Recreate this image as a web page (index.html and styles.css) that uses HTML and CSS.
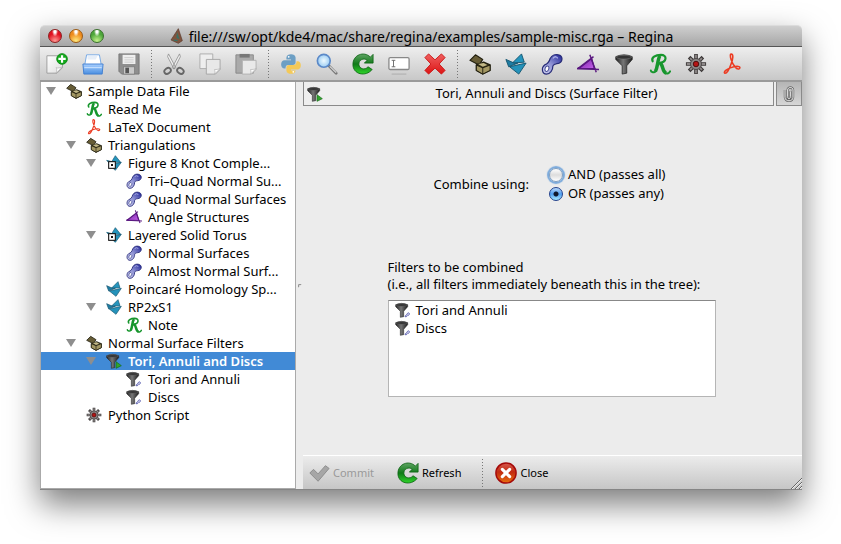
FILE: index.html
```html
<!DOCTYPE html>
<html lang="en">
<head>
<meta charset="utf-8">
<title>sample-misc.rga – Regina</title>
<link rel="stylesheet" href="styles.css">
</head>
<body>
<svg class="defs" aria-hidden="true">
  <defs>
    <linearGradient id="g-blue" x1="0" y1="0" x2="0" y2="1"><stop offset="0" stop-color="#a9d0ff"/><stop offset="1" stop-color="#4a8ee0"/></linearGradient>
    <linearGradient id="g-page" x1="0" y1="0" x2="1" y2="1"><stop offset="0" stop-color="#fff"/><stop offset="1" stop-color="#dedede"/></linearGradient>
    <linearGradient id="g-green" x1="0" y1="0" x2="0" y2="1"><stop offset="0" stop-color="#5fa364"/><stop offset=".5" stop-color="#107a18"/><stop offset="1" stop-color="#2fd42a"/></linearGradient>
    <linearGradient id="g-red" x1="0" y1="0" x2="0" y2="1"><stop offset="0" stop-color="#ef6060"/><stop offset="1" stop-color="#dd1414"/></linearGradient>
    <linearGradient id="g-funnel" x1="0" y1="0" x2="1" y2="0"><stop offset="0" stop-color="#222"/><stop offset=".45" stop-color="#777"/><stop offset="1" stop-color="#1c1c1c"/></linearGradient>
    <linearGradient id="g-link" x1="0" y1="1" x2="1" y2="0"><stop offset="0" stop-color="#d4d6f4"/><stop offset=".5" stop-color="#8a8ed2"/><stop offset="1" stop-color="#1d2196"/></linearGradient>
    <linearGradient id="g-angle" x1="0" y1="0" x2="1" y2="1"><stop offset="0" stop-color="#7023a0"/><stop offset="1" stop-color="#c860ec"/></linearGradient>
    <radialGradient id="g-lens"><stop offset="0" stop-color="#eefaff"/><stop offset="1" stop-color="#9ccdf3"/></radialGradient>
    <linearGradient id="g-close" x1="0" y1="0" x2="0" y2="1"><stop offset="0" stop-color="#d65a50"/><stop offset=".45" stop-color="#c22a10"/><stop offset="1" stop-color="#e8700e"/></linearGradient>
  </defs>
  <symbol id="new" viewBox="0 0 24 24"><path d="M1 3h17v13l-6 6H1z" fill="url(#g-page)" stroke="#999"/><path d="M18 15l-7 7c1-3 1-5 0-6 2 1 5 0 7-1z" fill="#fff" stroke="#aaa" stroke-width=".7"/><circle cx="17.500" cy="6.500" r="5.800" fill="#12a81b" stroke="#0a8a12"/><path d="M17.500 2.500v8M13.500 6.500h8" stroke="#fff" stroke-width="2.400"/></symbol>
  <symbol id="open" viewBox="0 0 24 24"><path d="M5 2h14l2 11H3z" fill="#fff" stroke="#6fa4e4"/><path d="M6 3h11l-2 4H6z" fill="#e6eef8"/><path d="M1 12h22l-1 11H2z" fill="url(#g-blue)" stroke="#3f7ed0"/><path d="M2.500 16h19" stroke="#d7e9ff"/></symbol>
  <symbol id="save" viewBox="0 0 24 24"><path d="M1 1h22v22H4l-3-3z" fill="#8e8e8e" stroke="#777"/><path d="M5 2h14v10H5z" fill="#eee"/><path d="M7 5h10M7 7.500h10M7 10h10" stroke="#ccc"/><path d="M6 15h12v8H6z" fill="#c9c9c9" stroke="#6b6b6b" stroke-width=".6"/><path d="M8 16h4v6H8z" fill="#555"/></symbol>
  <symbol id="cut" viewBox="0 0 24 24"><path d="M6 1l8 15-2 1.500L5 4zM18 1l-8 15 2 1.500L19 4z" fill="#eee" stroke="#888" stroke-width=".8"/><ellipse cx="5" cy="19.500" rx="3.800" ry="2.900" transform="rotate(-35 5 19.500)" fill="none" stroke="#666" stroke-width="2"/><ellipse cx="19" cy="19.500" rx="3.800" ry="2.900" transform="rotate(35 19 19.500)" fill="none" stroke="#666" stroke-width="2"/></symbol>
  <symbol id="copy" viewBox="0 0 24 24"><path d="M1 1h14v16H1z" fill="#eee" stroke="#aaa"/><path d="M8 7h15v11l-5 5H8z" fill="#e8e8e8" stroke="#a5a5a5"/><path d="M23 17l-6 6c1-3 0-4 0-5 2 0 4 0 6-1z" fill="#fff" stroke="#aaa" stroke-width=".7"/></symbol>
  <symbol id="paste" viewBox="0 0 24 24"><path d="M1 2h19v20H1z" fill="#aaa" stroke="#888"/><path d="M5 1h11v4H5z" fill="#777"/><path d="M8 8h15v10l-5 5H8z" fill="#e9e9e9" stroke="#b0b0b0"/><path d="M23 17l-6 6c1-3 0-4 0-5 2 0 4 0 6-1z" fill="#fff" stroke="#aaa" stroke-width=".7"/></symbol>
  <symbol id="python" viewBox="0 0 24 24"><path d="M7 5c0-5 10-5 10 0v5c0 2-1 3-3 3H9c-2 0-3 1-3 4H5c-5 0-5-9 0-9h7V7H7z" fill="#6d9fc4"/><path d="M18 9h1c5 0 5 9 0 9h-7v1h5c0 5-10 5-10 0v-3c0-2 1-3 3-3h5c2 0 3-1 3-4z" fill="#f4c957"/><circle cx="9.500" cy="4.200" r="1" fill="#fff"/><circle cx="14.500" cy="20.500" r="1" fill="#fff"/></symbol>
  <symbol id="find" viewBox="0 0 24 24"><path d="M14 14l8 8" stroke="#777" stroke-width="3" stroke-linecap="round"/><path d="M15 14.500l7 7" stroke="#ddd" stroke-width="1.200"/><circle cx="8.500" cy="8.500" r="7" fill="url(#g-lens)" stroke="#5b89c8" stroke-width="1.800"/></symbol>
  <symbol id="refresh" viewBox="0 0 24 24"><path d="M23 1.500V11h-9.500l3-3C13 4.800 7.200 7.500 7.500 12.500c.3 4.700 6.500 6.800 10 2.500l4.500 3C15 26.500 1 23.500 1 12.500 1 2 13-2.500 20 4.500z" fill="url(#g-green)" stroke="#0b6412" stroke-width=".9"/></symbol>
  <symbol id="rename" viewBox="0 0 24 24"><rect x="1" y="5" width="22" height="13" rx="1.500" fill="#fff" stroke="#888" stroke-width="1.400"/><path d="M4 8h4M6 8v7M4 15h4" stroke="#666" fill="none"/><path d="M4 23h16" stroke="#aaa"/></symbol>
  <symbol id="delete" viewBox="0 0 24 24"><path d="M5 1l7 6.500L19 1l4 4-6.500 7 6.500 7-4 4-7-6.500L5 23l-4-4 6.500-7L1 5z" fill="url(#g-red)" stroke="#c11" stroke-linejoin="round"/></symbol>
  <symbol id="box" viewBox="0 0 24 24"><path d="M1 8l6-6 8 5-4 6z" fill="#665c36" stroke="#222010" stroke-width="1.200" stroke-linejoin="round"/><path d="M8 13l8-3 7 3v6l-8 4-7-4z" fill="#3a341c" stroke="#222010" stroke-width="1.300" stroke-linejoin="round"/><path d="M8 13l7 3 8-3v6l-8 4-7-4z" fill="#a39763" stroke="#222010" stroke-width="1.100" stroke-linejoin="round"/><path d="M10 12l6-1 4 2-5 2z" fill="#c2b887"/><path d="M15 16v7" stroke="#222010"/></symbol>
  <symbol id="tri" viewBox="0 0 24 24"><path d="M18 1l3 9-13 1z" fill="#2595bd" stroke="#145570" stroke-linejoin="round"/><path d="M1 7l9 4h4l-10 4z" fill="#1f7da3" stroke="#145570" stroke-linejoin="round"/><path d="M5 15l18-4-8 12z" fill="#2492ba" stroke="#145570" stroke-linejoin="round"/></symbol>
  <symbol id="tri-box" viewBox="0 0 24 24"><path d="M14 1l8 10H8zM1 8l12 3-6 4zM5 15l18-4-9 12z" fill="#2595bd" stroke="#145570" stroke-linejoin="round"/><rect x="4" y="10" width="10" height="10" fill="#fff" stroke="#111" stroke-width="1.600"/><rect x="7.500" y="13.500" width="3" height="3" fill="#111"/></symbol>
  <symbol id="link" viewBox="0 0 24 24"><path d="M10 6c2-4 6-5 9-4 5 1 5 7 1 9-3 1-6 0-7 3 0 5-3 9-7 9-5 0-6-7-2-10 3-1 5-3 6-7z" fill="url(#g-link)" stroke="#272b78" stroke-width="1.300"/><ellipse cx="6.500" cy="17" rx="2" ry="3" transform="rotate(20 6 17)" fill="#fff" stroke="#444a92"/><path d="M13 6c2-3 5-2 5 0" stroke="#aeb2e8" fill="none" stroke-width="1.400"/></symbol>
  <symbol id="angle" viewBox="0 0 24 24"><path d="M2 17L16 6l3 11z" fill="url(#g-angle)" stroke="#5a1880" stroke-width="1.400"/><path d="M14 2l7 19M0 17l24 1M1 17L18 4" stroke="#5a1880" stroke-width="1.600"/></symbol>
  <symbol id="funnel" viewBox="0 0 24 24"><path d="M3 4q9-4 18 0v3l-6 7v8l-5 1v-9L3 7z" fill="url(#g-funnel)" stroke="#222" stroke-width=".8"/><ellipse cx="12" cy="4.500" rx="8.500" ry="2" fill="#333" stroke="#777" stroke-width=".6"/></symbol>
  <symbol id="funnel-link" viewBox="0 0 24 24"><use href="#funnel" x="-2" width="24" height="24"/><path d="M15 22c0-3 3-1 3-4 2-4 6 0 2 2-2 0-2 3-5 2z" fill="#dfe0f6" stroke="#666ab4" stroke-width="1.500"/></symbol>
  <symbol id="funnel-go" viewBox="0 0 24 24"><use href="#funnel" x="-2" width="24" height="24"/><path d="M15 13l8 6-8 4z" fill="#31a42c" stroke="#17691a"/></symbol>
  <symbol id="script" viewBox="0 0 24 24"><path d="M4 9c-2-4 3-7 9-7 7 0 7 8-2 9" fill="none" stroke="#17962d" stroke-width="2.400" stroke-linecap="round"/><path d="M12 3C9 7 10 15 7 20M12 11c4 2 2 10 7 11" fill="none" stroke="#17962d" stroke-width="3.800"/><path d="M7 20c-1 2-5 1-5-1M18 22c2 1 4 0 5-2" fill="none" stroke="#17962d" stroke-width="2.200" stroke-linecap="round"/></symbol>
  <symbol id="gear" viewBox="0 0 24 24"><path d="M12 1v22M1 12h22M4.500 4.500l15 15M19.500 4.500l-15 15" stroke="#3c3838" stroke-width="4"/><path d="M12 2v20M2 12h20M5.500 5.500l13 13M18.500 5.500l-13 13" stroke="#8d8888" stroke-width="2"/><circle cx="12" cy="12" r="6" fill="#8a8585" stroke="#484444"/><circle cx="12" cy="12" r="3" fill="#b41414" stroke="#450c0c"/></symbol>
  <symbol id="pdf" viewBox="0 0 24 24"><path d="M11 1c3 0 2 6 0 11-2 6-5 11-7 10-2-2 5-6 10-7 5-1 8 0 6 2-3 2-7-4-9-10-1-3-1-6 0-6z" fill="none" stroke="#ec3b22" stroke-width="1.700"/></symbol>
  <symbol id="clip" viewBox="0 0 24 24"><path d="M6 6v11c0 7 12 7 12 0V6c0-5-8-5-8 0v10c0 4 4 4 4 0V8" fill="none" stroke="#666" stroke-width="3.600"/><path d="M6 6v11c0 7 12 7 12 0V6c0-5-8-5-8 0v10c0 4 4 4 4 0V8" fill="none" stroke="#eee" stroke-width="1.500"/></symbol>
  <symbol id="check" viewBox="0 0 24 24"><path d="M2 12l4-4 5 5 8-9 4 3-12 14z" fill="#a6a6a6" stroke="#8a8a8a"/></symbol>
  <symbol id="close" viewBox="0 0 24 24"><circle cx="12" cy="12" r="11" fill="url(#g-close)" stroke="#a40909" stroke-width="1.600"/><path d="M8 8l8 8M16 8l-8 8" stroke="#fff" stroke-width="3.400" stroke-linecap="round"/></symbol>
  <symbol id="regina" viewBox="0 0 24 24"><path d="M14 1l6 18-6 4L3 18z" fill="#80533d" stroke="#57382a"/><path d="M12 6l4 11-5-2z" fill="#3a7164"/><path d="M7 18l6 1" stroke="#3a7164" stroke-width="2"/></symbol>
</svg>

<main class="window">
  <header class="titlebar">
    <div class="lights">
      <button class="light light-red" aria-label="Close window"></button>
      <button class="light light-amber" aria-label="Minimise window"></button>
      <button class="light light-green" aria-label="Zoom window"></button>
    </div>
    <h1 class="title"><svg class="icon"><use href="#regina"/></svg>file:///sw/opt/kde4/mac/share/regina/examples/sample-misc.rga – Regina</h1>
  </header>

  <nav class="toolbar" aria-label="Main toolbar">
    <button class="tool" aria-label="New"><svg><use href="#new"/></svg></button>
    <button class="tool" aria-label="Open"><svg><use href="#open"/></svg></button>
    <button class="tool" aria-label="Save"><svg><use href="#save"/></svg></button>
    <span class="sep"></span>
    <button class="tool" aria-label="Cut"><svg><use href="#cut"/></svg></button>
    <button class="tool" aria-label="Copy"><svg><use href="#copy"/></svg></button>
    <button class="tool" aria-label="Paste"><svg><use href="#paste"/></svg></button>
    <span class="sep"></span>
    <button class="tool" aria-label="Python console"><svg><use href="#python"/></svg></button>
    <button class="tool" aria-label="View"><svg><use href="#find"/></svg></button>
    <button class="tool" aria-label="Refresh packet"><svg><use href="#refresh"/></svg></button>
    <button class="tool" aria-label="Rename"><svg><use href="#rename"/></svg></button>
    <button class="tool" aria-label="Delete"><svg><use href="#delete"/></svg></button>
    <span class="sep"></span>
    <button class="tool" aria-label="New container"><svg><use href="#box"/></svg></button>
    <button class="tool" aria-label="New triangulation"><svg><use href="#tri"/></svg></button>
    <button class="tool" aria-label="New surface list"><svg><use href="#link"/></svg></button>
    <button class="tool" aria-label="New angle structures"><svg><use href="#angle"/></svg></button>
    <button class="tool" aria-label="New filter"><svg><use href="#funnel"/></svg></button>
    <button class="tool" aria-label="New text"><svg><use href="#script"/></svg></button>
    <button class="tool" aria-label="New script"><svg><use href="#gear"/></svg></button>
    <button class="tool" aria-label="New PDF"><svg><use href="#pdf"/></svg></button>
  </nav>

  <div class="content">
    <ul class="tree">
      <li class="row"><span class="arrow"></span><svg class="icon"><use href="#box"/></svg>Sample Data File</li>
      <li class="row level-1"><span class="leaf"></span><svg class="icon"><use href="#script"/></svg>Read Me</li>
      <li class="row level-1"><span class="leaf"></span><svg class="icon"><use href="#pdf"/></svg>LaTeX Document</li>
      <li class="row level-1"><span class="arrow"></span><svg class="icon"><use href="#box"/></svg>Triangulations</li>
      <li class="row level-2"><span class="arrow"></span><svg class="icon"><use href="#tri-box"/></svg>Figure 8 Knot Comple...</li>
      <li class="row level-3"><span class="leaf"></span><svg class="icon"><use href="#link"/></svg>Tri–Quad Normal Su...</li>
      <li class="row level-3"><span class="leaf"></span><svg class="icon"><use href="#link"/></svg>Quad Normal Surfaces</li>
      <li class="row level-3"><span class="leaf"></span><svg class="icon"><use href="#angle"/></svg>Angle Structures</li>
      <li class="row level-2"><span class="arrow"></span><svg class="icon"><use href="#tri-box"/></svg>Layered Solid Torus</li>
      <li class="row level-3"><span class="leaf"></span><svg class="icon"><use href="#link"/></svg>Normal Surfaces</li>
      <li class="row level-3"><span class="leaf"></span><svg class="icon"><use href="#link"/></svg>Almost Normal Surf...</li>
      <li class="row level-2"><span class="leaf"></span><svg class="icon"><use href="#tri"/></svg>Poincaré Homology Sp...</li>
      <li class="row level-2"><span class="arrow"></span><svg class="icon"><use href="#tri"/></svg>RP2xS1</li>
      <li class="row level-3"><span class="leaf"></span><svg class="icon"><use href="#script"/></svg>Note</li>
      <li class="row level-1"><span class="arrow"></span><svg class="icon"><use href="#box"/></svg>Normal Surface Filters</li>
      <li class="row level-2 selected"><span class="arrow"></span><svg class="icon"><use href="#funnel-go"/></svg>Tori, Annuli and Discs</li>
      <li class="row level-3"><span class="leaf"></span><svg class="icon"><use href="#funnel-link"/></svg>Tori and Annuli</li>
      <li class="row level-3"><span class="leaf"></span><svg class="icon"><use href="#funnel-link"/></svg>Discs</li>
      <li class="row level-1"><span class="leaf"></span><svg class="icon"><use href="#gear"/></svg>Python Script</li>
    </ul>
    <div class="splitter"><span class="grip"></span></div>

    <section class="panel">
      <div class="panel-head">
        <h2 class="panel-title"><svg class="icon"><use href="#funnel-go"/></svg><span>Tori, Annuli and Discs (Surface Filter)</span></h2>
        <button class="dock" aria-label="Dock or undock"><svg class="icon"><use href="#clip"/></svg></button>
      </div>
      <form class="form">
        <div class="combine">
          <span id="combine-label">Combine using:</span>
          <div class="options" role="radiogroup" aria-labelledby="combine-label">
            <label class="option"><input class="radio halo" type="radio" name="combine">AND (passes all)</label>
            <label class="option"><input class="radio" type="radio" name="combine" checked>OR (passes any)</label>
          </div>
        </div>
        <div class="filters">
          <p class="caption">Filters to be combined<br>(i.e., all filters immediately beneath this in the tree):</p>
          <ul class="list">
            <li class="item"><svg class="icon"><use href="#funnel-link"/></svg>Tori and Annuli</li>
            <li class="item"><svg class="icon"><use href="#funnel-link"/></svg>Discs</li>
          </ul>
        </div>
      </form>
      <footer class="actions">
        <button class="action" disabled><svg><use href="#check"/></svg>Commit</button>
        <button class="action"><svg><use href="#refresh"/></svg>Refresh</button>
        <span class="sep"></span>
        <button class="action"><svg><use href="#close"/></svg>Close</button>
        <svg class="resize" viewBox="0 0 12 12"><path d="M1 12L12 1M5 12l7-7M9 12l3-3" stroke="#666"/><path d="M2 12L12 2M6 12l6-6M10 12l2-2" stroke="#eee"/></svg>
      </footer>
    </section>
  </div>
</main>
</body>
</html>
```
FILE: styles.css
```css
* { box-sizing: border-box; }
body {
  margin: 0;
  min-height: 100vh;
  padding: 25px 39px 54px 40px;
  display: flex;
  background: #fff;
  color: #000;
  font: 13px/17px "Noto Sans", "Open Sans", sans-serif;
}
ul, h1, h2, p { margin: 0; padding: 0; list-style: none; font: inherit; }
button { margin: 0; padding: 0; border: 0; background: none; color: inherit; font: inherit; }
.defs { position: absolute; width: 0; height: 0; }
.icon { width: 16px; height: 16px; flex: none; }

.window {
  flex: 1;
  min-width: 0;
  display: flex;
  flex-direction: column;
  border-radius: 5px 5px 0 0;
  background: #ececec;
  box-shadow: 0 14px 32px rgba(0, 0, 0, .52);
  border-bottom: 1px solid #858585;
}
.titlebar {
  display: grid;
  grid-template-columns: 1fr auto 1fr;
  align-items: center;
  height: 22px;
  padding: 0 8px;
  border-top: 1px solid #dcdcdc;
  border-bottom: 1px solid #555;
  border-radius: 5px 5px 0 0;
  background: linear-gradient(#cfcfcf, #a6a6a6);
}
.lights { display: flex; gap: 7px; }
.light { width: 14px; height: 14px; border-radius: 50%; border: 1px solid; }
.light-red { border-color: #8c2020; background: radial-gradient(ellipse at 50% 10%, #fff 0 12%, transparent 35%), radial-gradient(circle at 50% 90%, #ff9b96, #e01020 60%); }
.light-amber { border-color: #9a5a14; background: radial-gradient(ellipse at 50% 10%, #fff 0 12%, transparent 35%), radial-gradient(circle at 50% 90%, #ffeb80, #ee8a1c 60%); }
.light-green { border-color: #39702c; background: radial-gradient(ellipse at 50% 10%, #fff 0 12%, transparent 35%), radial-gradient(circle at 50% 90%, #c5f48c, #4da63a 60%); }
.title { display: flex; align-items: center; gap: 4px; font-size: 14px; white-space: nowrap; }

.toolbar {
  display: flex;
  align-items: center;
  gap: 2px;
  height: 35px;
  border-bottom: 2px solid #9a9a9a;
  background: linear-gradient(#eee, #c8c8c8);
}
.tool { width: 34px; height: 32px; display: grid; place-items: center; }
.tool svg, .action svg { width: 22px; height: 22px; }
.sep { flex: none; width: 7px; height: 28px; background: repeating-linear-gradient(#777 0 1px, transparent 1px 3px) center / 1px 100% no-repeat; }

.content { flex: 1; display: flex; min-height: 0; }
.tree {
  flex: 0 0 256px;
  background: #fff;
  border: 1px solid #aaa;
  border-top: 0;
}
.row, .item { display: flex; align-items: center; height: 18px; white-space: nowrap; }
.level-1 { padding-left: 20px; }
.level-2 { padding-left: 40px; }
.level-3 { padding-left: 60px; }
.row .icon { margin-right: 6px; }
.arrow, .leaf { flex: none; width: 25px; height: 8px; }
.arrow::before {
  content: "";
  display: block;
  width: 10px;
  height: 8px;
  margin-left: 5px;
  background: #8e8e8e;
  clip-path: polygon(0 0, 100% 0, 50% 100%);
}
.selected { background: #418ad6; color: #fff; font-weight: 600; }
.splitter { flex: 0 0 7px; display: grid; place-items: center; }
.grip { width: 4px; height: 4px; border: 1px solid #888; border-right-color: transparent; border-bottom-color: transparent; border-radius: 50%; }

.panel { flex: 1; min-width: 0; display: flex; flex-direction: column; }
.panel-head { display: flex; gap: 2px; height: 24px; }
.panel-title { flex: 1; display: flex; align-items: center; padding: 0 3px; border: 1px solid #8a8a8a; border-top: 0; background: #eee; }
.panel-title span { flex: 1; text-align: center; }
.dock { width: 26px; display: grid; place-items: center; border: 1px solid #8a8a8a; border-top: 0; background: linear-gradient(#b5b5b5, #d6d6d6); }

.form { flex: 1; display: flex; flex-direction: column; align-items: center; justify-content: space-between; padding: 60px 2px 58px 0; }
.combine { display: flex; align-items: center; gap: 20px; padding-right: 4px; }
.options { display: grid; gap: 2px; }
.option { display: flex; align-items: center; gap: 5px; }
.radio {
  appearance: none;
  width: 14px;
  height: 14px;
  margin: 0;
  border: 1px solid #777;
  border-radius: 50%;
  background: linear-gradient(#fff, #ddd 50%, #fff);
}
.radio:checked { border-color: #23428c; background: radial-gradient(circle, #10182c 0 2px, transparent 3px), linear-gradient(#b8d7fa, #4e9df0 50%, #a8eaff); }
.radio.halo { border-color: #7d9dc0; box-shadow: 0 0 1px 2px #7aa9db; }
.filters { width: 328px; }
.caption { white-space: nowrap; }
.list { height: 97px; margin-top: 7px; padding: 0 6px; border: 1px solid #b5b5b5; border-top-color: #888; background: #fff; }
.item { gap: 5px; }

.actions {
  display: flex;
  align-items: center;
  height: 34px;
  border-top: 1px solid #fff;
  background: linear-gradient(#ececec, #c6c6c6);
  font-size: 11px;
}
.action { display: flex; align-items: center; gap: 3px; height: 32px; padding: 0 5px; }
.action + .action { margin-left: 13px; }
.action:disabled { color: #999; }
.actions .sep { margin: 0 4px 0 13px; }
.resize { width: 12px; height: 12px; margin-left: auto; align-self: flex-end; }
```
